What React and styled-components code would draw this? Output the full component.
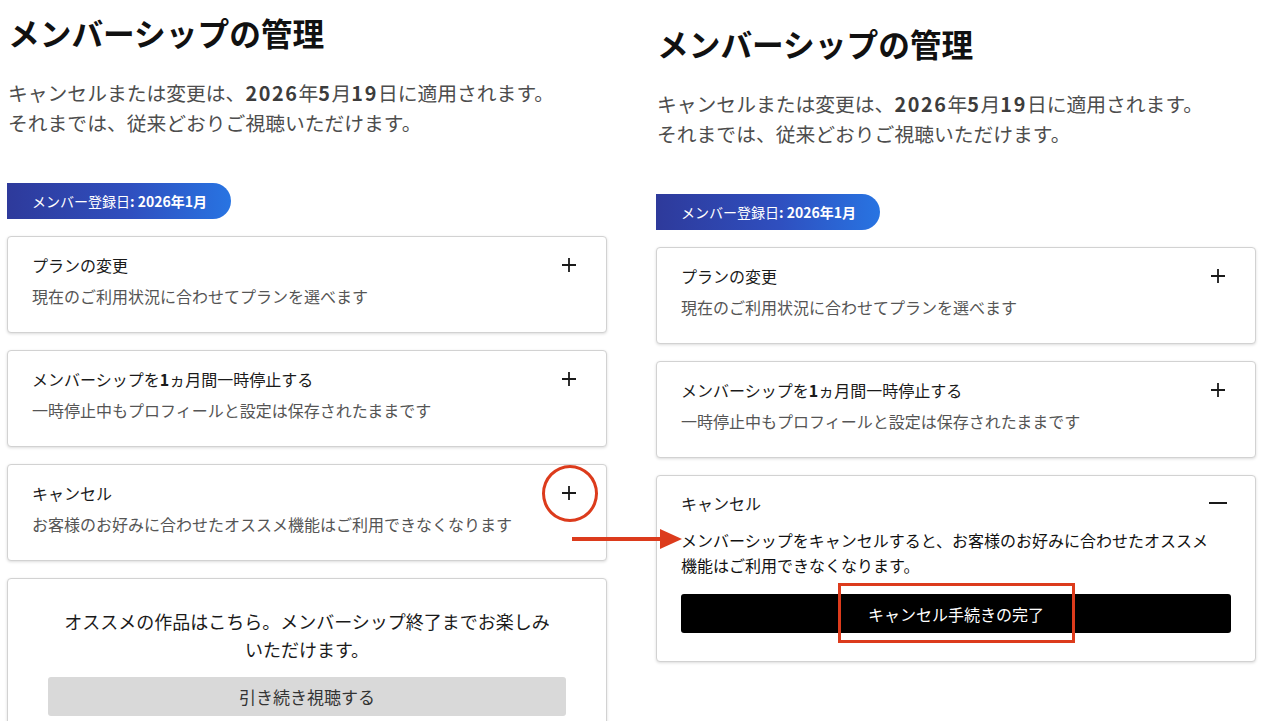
import React from "react"
import styled, { createGlobalStyle } from "styled-components"

const GlobalStyle = createGlobalStyle`
  html, body {
    margin: 0;
    padding: 0;
    background: #fff;
    overflow: hidden;
  }
  body {
    font-family: "Noto Sans CJK JP", "Noto Sans", sans-serif;
    color: #111;
  }
`

const accent = "#dc3b1c"

/**
 * Two screenshots of the same page, side by side
 */
const Stage = styled.div`
  position: relative;
  display: flex;
  align-items: flex-start;
  gap: 49px;
  width: 1265px;
  height: 721px;
  padding-left: 7px;
  box-sizing: border-box;
  overflow: hidden;
`

const Panel = styled.section`
  width: 600px;
  flex: 0 0 600px;
  padding-top: ${props => props.$top}px;
  display: flex;
  flex-direction: column;
`

const Title = styled.h1`
  margin: 0 0 0 1px;
  font-size: 31.7px;
  line-height: 40px;
  font-weight: 700;
  color: #111;
`

const Intro = styled.p`
  margin: 26px 0 0 1px;
  font-size: 19.8px;
  line-height: 30px;
  color: #4d4d4d;

  b {
    font-weight: 700;
    color: #3c3c3c;
    letter-spacing: 1.6px;
  }
`

const Badge = styled.div`
  align-self: flex-start;
  margin-top: 45px;
  height: 36px;
  padding: 0 24px 0 25px;
  display: flex;
  align-items: center;
  border-radius: 0 18px 18px 0;
  background: linear-gradient(90deg, #2e3a9b 0%, #2f4fbf 55%, #2874e2 100%);
  color: #fff;
  font-size: 14px;

  b {
    font-weight: 700;
  }
`

const CardList = styled.div`
  display: flex;
  flex-direction: column;
  gap: 17px;
  margin-top: 17px;
`

const Card = styled.div`
  position: relative;
  background: #fff;
  border: 1px solid #d2d2d2;
  border-radius: 4px;
  box-shadow: 0 1px 3px rgba(0, 0, 0, 0.14);
  padding: ${props => (props.$open ? "15px 24px 28px" : "16px 24px 24px")};
`

const CardHead = styled.div`
  display: flex;
  align-items: center;
  justify-content: space-between;
`

const CardTitle = styled.div`
  font-size: 16px;
  line-height: 24px;
  color: #1a1a1a;

  b {
    font-weight: 700;
  }
`

const CardSub = styled.div`
  margin-top: 7px;
  font-size: 16px;
  line-height: 24px;
  color: #555;
`

const CardBody = styled.p`
  margin: 13px 10px 0 0;
  font-size: 16px;
  line-height: 25px;
  color: #111;
`

const ToggleIcon = styled.span`
  position: relative;
  display: flex;
  align-items: center;
  justify-content: center;
  width: 24px;
  height: 24px;
  margin-right: 1px;
`

const Button = styled.button`
  position: relative;
  display: block;
  width: 100%;
  height: 39px;
  border: none;
  border-radius: 3px;
  font-family: inherit;
  font-size: ${props => (props.$dark ? "16px" : "17px")};
  background: ${props => (props.$dark ? "#000" : "#d9d9d9")};
  color: ${props => (props.$dark ? "#fff" : "#333")};
  margin-top: ${props => (props.$dark ? "16px" : "14px")};
  cursor: pointer;
`

const PromoCard = styled(Card)`
  padding: 28px 40px 40px;
  text-align: center;
`

const PromoText = styled.p`
  margin: 0 auto;
  width: 490px;
  font-size: 18px;
  line-height: 28px;
  color: #1a1a1a;
`

/* annotations drawn over the screenshots */
const Ring = styled.span`
  position: absolute;
  top: -16px;
  left: -15px;
  width: 50px;
  height: 51px;
  border: 3px solid ${accent};
  border-radius: 50%;
  pointer-events: none;
`

const Frame = styled.span`
  position: absolute;
  top: -11px;
  left: 157px;
  width: 231px;
  height: 54px;
  border: 3px solid ${accent};
  pointer-events: none;
`

const Arrow = styled.svg`
  position: absolute;
  left: 570px;
  top: 528px;
  pointer-events: none;
`

function Plus() {
  return (
    <svg width="16" height="16" viewBox="0 0 16 16">
      <path d="M8 1v14M1 8h14" stroke="#1a1a1a" strokeWidth="1.8" fill="none" />
    </svg>
  )
}

function Minus() {
  return (
    <svg width="18" height="16" viewBox="0 0 18 16">
      <path d="M0 8h18" stroke="#1a1a1a" strokeWidth="2" fill="none" />
    </svg>
  )
}

function CollapsedCard({ title, sub, marked }) {
  return (
    <Card>
      <CardHead>
        <CardTitle>{title}</CardTitle>
        <ToggleIcon>
          <Plus />
          {marked && <Ring />}
        </ToggleIcon>
      </CardHead>
      <CardSub>{sub}</CardSub>
    </Card>
  )
}

function Header({ top, children }) {
  return (
    <Panel $top={top}>
      <Title>メンバーシップの管理</Title>
      <Intro>
        キャンセルまたは変更は、<b>2026</b>年<b>5</b>月<b>19</b>日に適用されます。
        <br />
        それまでは、従来どおりご視聴いただけます。
      </Intro>
      <Badge>
        メンバー登録日<b>: 2026年1月</b>
      </Badge>
      <CardList>{children}</CardList>
    </Panel>
  )
}

const pauseTitle = (
  <>
    メンバーシップを<b>1</b>ヵ月間一時停止する
  </>
)

export default function App() {
  return (
    <>
      <GlobalStyle />
      <Stage>
        <Header top={12}>
          <CollapsedCard title="プランの変更" sub="現在のご利用状況に合わせてプランを選べます" />
          <CollapsedCard title={pauseTitle} sub="一時停止中もプロフィールと設定は保存されたままです" />
          <CollapsedCard
            title="キャンセル"
            sub="お客様のお好みに合わせたオススメ機能はご利用できなくなります"
            marked
          />
          <PromoCard>
            <PromoText>
              オススメの作品はこちら。メンバーシップ終了までお楽しみいただけます。
            </PromoText>
            <Button>引き続き視聴する</Button>
          </PromoCard>
        </Header>

        <Header top={23}>
          <CollapsedCard title="プランの変更" sub="現在のご利用状況に合わせてプランを選べます" />
          <CollapsedCard title={pauseTitle} sub="一時停止中もプロフィールと設定は保存されたままです" />
          <Card $open>
            <CardHead>
              <CardTitle>キャンセル</CardTitle>
              <ToggleIcon>
                <Minus />
              </ToggleIcon>
            </CardHead>
            <CardBody>
              メンバーシップをキャンセルすると、お客様のお好みに合わせたオススメ機能はご利用できなくなります。
            </CardBody>
            <Button $dark>
              キャンセル手続きの完了
              <Frame />
            </Button>
          </Card>
        </Header>

        <Arrow width="114" height="22" viewBox="0 0 114 22">
          <path d="M2 11h92" stroke={accent} strokeWidth="4" />
          <path d="M90 1l22 10-22 10z" fill={accent} />
        </Arrow>
      </Stage>
    </>
  )
}
